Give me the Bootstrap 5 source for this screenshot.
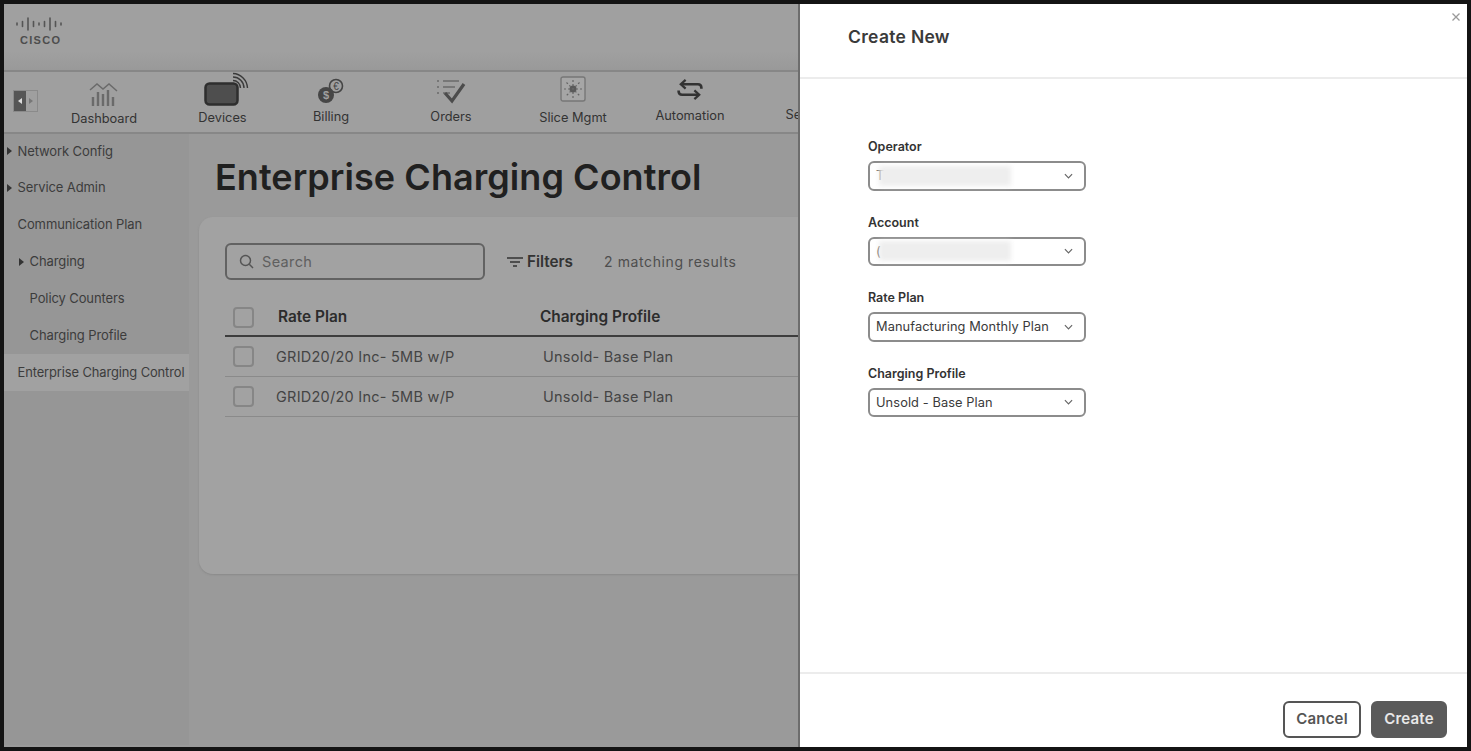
<!DOCTYPE html>
<html lang="en"><head><meta charset="utf-8"><title>Enterprise Charging Control</title>
<link href="https://cdn.jsdelivr.net/npm/bootstrap@5.3.0/dist/css/bootstrap.min.css" rel="stylesheet">
<style>
html,body{height:100%;margin:0;overflow:hidden}
body{background:#141414;font-family:Inter,"Liberation Sans",sans-serif;color:#2b2b2b}
.shell{position:relative;margin:4px;height:743px;width:1463px;overflow:hidden;background:#9a9a9a}
.brandbar{height:66px;padding:13px 0 0 11px;background:linear-gradient(#a0a0a0 0,#a0a0a0 72%,#999 100%)}
.brandword{font:700 11px/1 "Liberation Sans",sans-serif;letter-spacing:1.3px;color:#4d4d4d;margin:4px 0 0 5px}
.modbar{height:64px;background:#9f9f9f;border-top:2px solid #878787;border-bottom:2px solid #878787;white-space:nowrap}
.toggler{width:25px;height:22px;margin:18px 0 0 9px;border:1px solid #8a8a8a;flex:none}
.toggler i{display:flex;align-items:center;justify-content:center;width:50%;height:100%}
.toggler i:first-child{background:#555}
.modlink{flex:none;display:flex;flex-direction:column;align-items:center;font-size:12.8px;color:#333;line-height:16px}
.modlink svg{display:block}
.m1{width:110px;margin-left:11px;padding-top:5px}
.m1 span{margin-top:2px}
.m2{width:105px;margin-left:11px;padding-top:0}
.m2 svg{margin-left:7px}
.m3{width:110px;margin-left:1px;padding-top:5px}
.m4{width:100px;margin-left:15px;padding-top:5px}
.m5{width:110px;margin-left:17px;padding-top:4px}
.m6{width:100px;margin-left:12px;padding-top:7px}
.m7{width:60px;margin-left:40px;padding-top:35px}
.bodyrow{height:611px}
.sidecol{width:185px;flex:none;background:#969696}
.sideitem{height:36.8px;display:flex;align-items:center;font-size:13px;letter-spacing:-.1px;color:#3c3c3c;padding-left:13.5px;white-space:nowrap;position:relative}
.sideitem:first-child{margin-top:-1px}
.sideitem.sub{padding-left:25.5px}
.sideitem.on{background:#a1a1a1;font-size:12.9px}
.tri{width:0;height:0;border-left:5px solid #333;border-top:4px solid transparent;border-bottom:4px solid transparent;margin-left:-11px;margin-right:6px}
.maincol{flex:1;padding:0 0 0 10px;overflow:hidden}
.pagetitle{font-weight:600;font-size:36px;line-height:44px;letter-spacing:.05px;color:#202020;margin:21px 0 18px 16px;white-space:nowrap}
.panelcard{height:357px;width:800px;background:#a2a2a2;border-radius:14px 0 0 14px;padding:26px 26px;box-shadow:0 1px 2px #8a8a8a}
.searchbox{width:260px;height:37px;border:2px solid #626262;border-radius:6px;padding-left:12px;color:#5f5f5f;font-size:14.5px;letter-spacing:.35px}
.filterbtn{font-weight:600;font-size:15.3px;color:#333;margin-left:22px;padding-top:1px}
.matchcount{font-size:14px;letter-spacing:.6px;color:#4e4e4e;margin-left:31px}
.gridrow{height:40px;border-bottom:1px solid #8a8a8a;width:580px}
.gridrow.head{height:37px;margin-top:20px;border-bottom:2px solid #3d3d3d;font-weight:600;font-size:15.4px;color:#2c2c2c;padding-bottom:1px}
.gridrow.item{font-size:14.5px;letter-spacing:.25px;color:#444}
.tick{width:21px;height:21px;border:2px solid #868686;border-radius:4px;margin-left:8px;flex:none}
.colone{margin-left:24px;width:262px;flex:none}
.gridrow.item .colone{margin-left:22px;width:267px}
.drawer{position:absolute;top:0;right:0;bottom:0;background:#fff;border-left:2px solid #6d6d6d;box-sizing:content-box;width:667px}
.drawerhead{height:75px;border-bottom:2px solid #ececec;padding:21px 0 0 48px;font-weight:600;font-size:17.5px;line-height:24px;letter-spacing:.3px;color:#3a3a3a}
.closer{position:absolute;top:8px;right:6px;width:10px;height:10px}
.drawerbody{height:593px;padding:60px 0 0 68px}
.fieldset{width:218px;margin-bottom:24px}
.fieldset label{display:block;font-weight:600;font-size:12.5px;line-height:16px;color:#333;margin-bottom:6px}
.fieldset .form-select{height:29.5px;border:2px solid #8c8c8c;border-radius:6px;padding:0 0 0 6px;font-size:12.8px;letter-spacing:.1px;color:#3a3a3a;background-image:url("data:image/svg+xml,%3csvg xmlns='http://www.w3.org/2000/svg' viewBox='0 0 10 6'%3e%3cpath fill='none' stroke='%23666' stroke-width='1.3' d='M1 1l4 4 4-4'/%3e%3c/svg%3e");background-position:right 11px center;background-size:9px 6px;box-shadow:none}
.maskedval{display:flex;align-items:center;height:100%}
.maskedval span{color:#555;width:3px;flex:none}
.smear{width:132px;height:20px;background:#eee;filter:blur(2.5px);margin-left:0}
.drawerfoot{height:73px;border-top:2px solid #ececec;padding:27px 20px 0 0;gap:10px}
.btn.act{height:37px;font-weight:600;font-size:15px;border-radius:6px;padding:0;letter-spacing:.2px}
.act.ghost{width:78px;background:#fff;border:2px solid #555;color:#555}
.act.solid{width:76px;background:#5a5a5a;border:2px solid #5a5a5a;color:#e8e8e8}
</style></head><body>
<div class="shell">
  <div class="brandbar">
    <svg width="48" height="14" viewBox="0 0 48 14" class="d-block"><g stroke="#555" stroke-width="1.6" stroke-linecap="round"><path d="M2 6v2M7.500 4.500v5M13 1v12M18.500 4.500v5M24 6v2M29.500 4.500v5M35 1v12M40.500 4.500v5M46 6v2"/></g></svg>
    <div class="brandword">CISCO</div>
  </div>
  <div class="modbar d-flex overflow-hidden">
    <div class="toggler d-flex"><i><svg width="4" height="6" viewBox="0 0 4 6"><path d="M4 0v6L0 3z" fill="#ddd"/></svg></i><i><svg width="4" height="6" viewBox="0 0 4 6"><path d="M0 0v6l4-3z" fill="#777"/></svg></i></div>
    <div class="modlink m1">
      <svg width="32" height="32" viewBox="0 0 32 32" fill="none" stroke="#6a6a6a"><path d="M2 13l7-6 6 5 6-5 8 7" stroke-width="1.500"/><path d="M5 29v-9M10 29V15M15 29V17M20 29V13M25 29v-9" stroke-width="2.400"/></svg>
      <span>Dashboard</span></div>
    <div class="modlink m2">
      <svg width="46" height="38" viewBox="0 0 46 38" fill="none"><rect x="2.500" y="11.500" width="32" height="21" rx="4" fill="#4e4e4e" stroke="#2e2e2e" stroke-width="2.500"/><g stroke="#3a3a3a" stroke-width="1.400"><path d="M30 5a11 11 0 0 1 11 11"/><path d="M30 1.500a15 15 0 0 1 14.500 14.500"/><path d="M30 8.500a7.500 7.500 0 0 1 7.500 7.500"/></g></svg>
      <span>Devices</span></div>
    <div class="modlink m3">
      <svg width="30" height="28" viewBox="0 0 30 28" fill="none"><circle cx="20" cy="9" r="6.500" stroke="#444" stroke-width="1.600"/><text x="20" y="12.500" text-anchor="middle" font-size="10" font-family="Liberation Sans" fill="#444">€</text><circle cx="10" cy="18" r="8" fill="#464646"/><text x="10" y="22" text-anchor="middle" font-size="11" font-weight="700" font-family="Liberation Sans" fill="#a0a0a0">$</text></svg>
      <span class="mt-1">Billing</span></div>
    <div class="modlink m4">
      <svg width="32" height="28" viewBox="0 0 32 28" fill="none"><g stroke="#777" stroke-width="1.800"><path d="M2 4h2M2 10h2M2 16h2M8 4h16M8 10h12M8 16h7"/></g><path d="M10 16l7 8L29 7" stroke="#4c4c4c" stroke-width="3.200"/></svg>
      <span class="mt-1">Orders</span></div>
    <div class="modlink m5">
      <svg width="26" height="26" viewBox="0 0 26 26" fill="none"><rect x="1" y="1" width="24" height="24" rx="2" stroke="#777" stroke-width="1.400" fill="#a6a6a6"/><circle cx="13" cy="13" r="3.500" fill="#5a5a5a"/><g stroke="#666" stroke-width="1.200"><path d="M13 4v18M4 13h18M6.500 6.500l13 13M19.500 6.500l-13 13" stroke-dasharray="2 2"/></g></svg>
      <span class="mt-2">Slice Mgmt</span></div>
    <div class="modlink m6">
      <svg width="30" height="21" viewBox="0 0 30 24" fill="none" stroke="#333" stroke-width="3"><path d="M5 6h19q4 0 4 4v1M25 18H6q-4 0-4-4v-1"/><path d="M10 1L4.500 6l5.500 5M20 13l5.500 5-5.500 5" stroke-width="2.600"/></svg>
      <span class="mt-2">Automation</span></div>
    <div class="modlink m7"><span>Settings</span></div>
  </div>
  <div class="bodyrow d-flex">
    <div class="sidecol">
      <div class="sideitem"><i class="tri"></i>Network Config</div>
      <div class="sideitem"><i class="tri"></i>Service Admin</div>
      <div class="sideitem">Communication Plan</div>
      <div class="sideitem sub"><i class="tri"></i>Charging</div>
      <div class="sideitem sub">Policy Counters</div>
      <div class="sideitem sub">Charging Profile</div>
      <div class="sideitem on">Enterprise Charging Control</div>
    </div>
    <div class="maincol">
      <h1 class="pagetitle">Enterprise Charging Control</h1>
      <div class="panelcard">
        <div class="d-flex align-items-center">
          <div class="searchbox d-flex align-items-center gap-2">
            <svg width="15" height="15" viewBox="0 0 15 15" fill="none" stroke="#555" stroke-width="1.500"><circle cx="6.500" cy="6.500" r="5"/><path d="M10.300 10.300L14 14"/></svg>
            <span>Search</span></div>
          <div class="filterbtn d-flex align-items-center gap-1">
            <svg width="16" height="10" viewBox="0 0 16 10" fill="none" stroke="#333" stroke-width="1.400"><path d="M0 1h16M3 5h10M6 9h4"/></svg>Filters</div>
          <div class="matchcount">2 matching results</div>
        </div>
        <div class="gridrow head d-flex align-items-center"><i class="tick"></i><div class="colone">Rate Plan</div><div>Charging Profile</div></div>
        <div class="gridrow item d-flex align-items-center"><i class="tick"></i><div class="colone">GRID20/20 Inc- 5MB w/P</div><div>Unsold- Base Plan</div></div>
        <div class="gridrow item d-flex align-items-center"><i class="tick"></i><div class="colone">GRID20/20 Inc- 5MB w/P</div><div>Unsold- Base Plan</div></div>
      </div>
    </div>
  </div>
  <aside class="drawer">
    <div class="drawerhead">Create New</div>
    <svg class="closer" viewBox="0 0 10 10" stroke="#9a9a9a" stroke-width="1.300"><path d="M1.500 1.500l7 7M8.500 1.500l-7 7"/></svg>
    <div class="drawerbody">
      <div class="fieldset"><label>Operator</label><div class="form-select"><div class="maskedval"><span>T</span><div class="smear"></div></div></div></div>
      <div class="fieldset"><label>Account</label><div class="form-select"><div class="maskedval"><span>(</span><div class="smear"></div></div></div></div>
      <div class="fieldset"><label>Rate Plan</label><select class="form-select"><option>Manufacturing Monthly Plan</option></select></div>
      <div class="fieldset"><label>Charging Profile</label><select class="form-select"><option>Unsold - Base Plan</option></select></div>
    </div>
    <div class="drawerfoot d-flex justify-content-end align-items-start">
      <button type="button" class="btn act ghost">Cancel</button>
      <button type="button" class="btn act solid">Create</button>
    </div>
  </aside>
</div>
<script src="https://cdn.jsdelivr.net/npm/bootstrap@5.3.0/dist/js/bootstrap.bundle.min.js"></script>
</body></html>
